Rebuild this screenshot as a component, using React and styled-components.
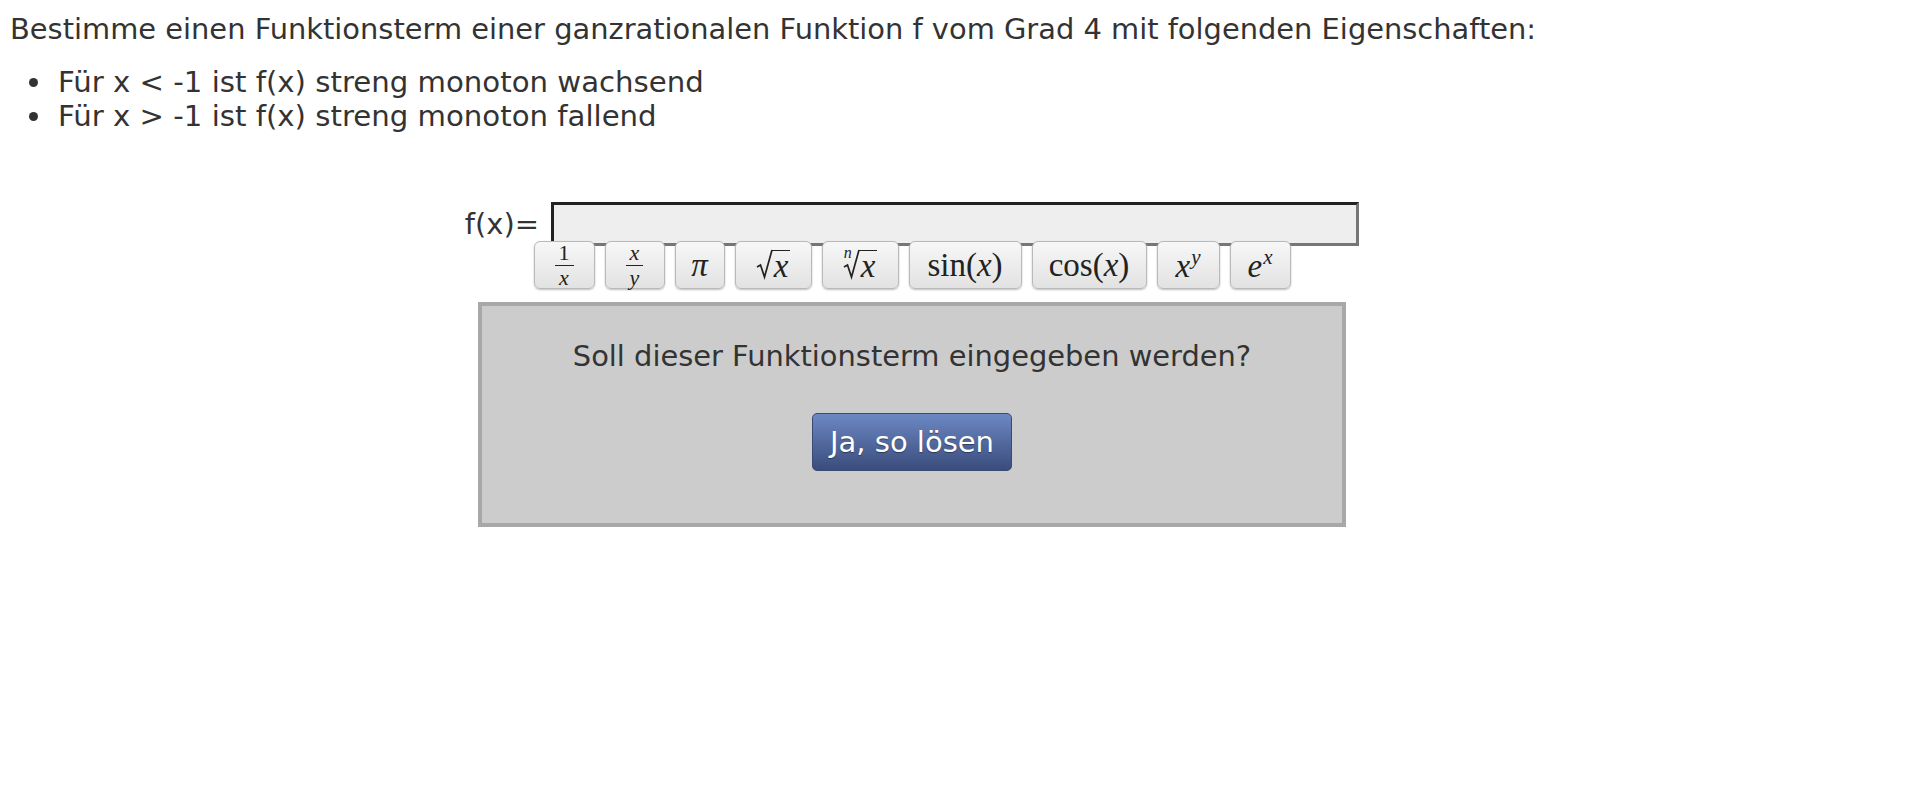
import React from 'react'
import styled, { createGlobalStyle } from 'styled-components'

const Global = createGlobalStyle`
  body {
    margin: 0;
    background: #fff;
    font-family: "DejaVu Sans", Verdana, sans-serif;
    color: #333;
  }
`

const Page = styled.div`
  padding: 12px 10px 40px 10px;
`

const Heading = styled.p`
  margin: 0;
  font-size: 28.9px;
  line-height: 34px;
`

const List = styled.ul`
  margin: 19px 0 0 0;
  padding-left: 48px;
  list-style: none;
  font-size: 29.2px;
  line-height: 34px;
`

const Item = styled.li`
  &::before {
    content: "";
    display: inline-block;
    width: 9px;
    height: 9px;
    border-radius: 50%;
    background: #333;
    margin-left: -29px;
    margin-right: 20px;
    vertical-align: 5px;
  }
`

const Main = styled.div`
  width: 1804px;
  margin-top: 69px;
  display: flex;
  flex-direction: column;
  align-items: center;
`

const InputRow = styled.div`
  display: flex;
  align-items: center;
  gap: 12px;
`

const Label = styled.span`
  font-size: 29px;
  line-height: 44px;
  color: #333;
`

const TermInput = styled.div`
  width: 802px;
  height: 38px;
  background: #eeeeee;
  border: 3px solid;
  border-color: #222 #767676 #767676 #222;
`

const Keypad = styled.div`
  display: flex;
  gap: 10px;
  margin-top: -5px;
  position: relative;
`

const Key = styled.button`
  min-width: ${p => p.$w}px;
  height: 48px;
  padding: 0 8px;
  display: flex;
  align-items: center;
  justify-content: center;
  background: linear-gradient(#f7f7f7, #e2e2e2);
  border: 1px solid #b9b9b9;
  border-radius: 6px;
  box-shadow: 0 1px 2px rgba(0, 0, 0, 0.25);
  font-family: "Liberation Serif", "DejaVu Serif", serif;
  font-size: 33px;
  color: #222;
  cursor: pointer;
`

const Var = styled.i`
  font-style: italic;
`

const Frac = styled.span`
  display: inline-flex;
  flex-direction: column;
  align-items: center;
  font-size: 22px;
  line-height: 19px;
`

const Num = styled.span`
  padding: 0 4px 3px;
  border-bottom: 1.3px solid #222;
`

const Den = styled.span`
  padding-top: 2px;
`

const Root = styled.span`
  display: inline-flex;
  align-items: flex-end;
  position: relative;
`

const RootIndex = styled.i`
  position: absolute;
  left: 1px;
  top: -5px;
  font-size: 16px;
`

const Radicand = styled.span`
  border-top: 1.6px solid #222;
  padding: 0 2px;
  line-height: 30px;
  font-style: italic;
`

const Sup = styled.sup`
  font-size: 21px;
  font-style: italic;
  vertical-align: 13px;
  margin-left: 1px;
`

const Panel = styled.div`
  margin-top: 13px;
  width: 860px;
  background: #cccccc;
  border: 4px solid #a8a8a8;
  padding: 34px 0 52px;
  display: flex;
  flex-direction: column;
  align-items: center;
`

const Question = styled.p`
  margin: 0;
  font-size: 28.9px;
  line-height: 32px;
  color: #333;
`

const Solve = styled.button`
  margin-top: 41px;
  height: 58px;
  padding: 0 17px;
  background: linear-gradient(#6c88c3, #3a4c7c);
  border: 1px solid #3a4a74;
  border-radius: 5px;
  color: #fff;
  font-family: "DejaVu Sans", Verdana, sans-serif;
  font-size: 29px;
  text-shadow: 0 1px 1px rgba(0, 0, 0, 0.4);
  cursor: pointer;
`

const RadicalSign = () => (
  <svg width="17" height="32" viewBox="0 0 17 32" style={{ marginRight: -1 }}>
    <path d="M1 18 L4.5 16 L8.5 28 L16 1" fill="none" stroke="#222" strokeWidth="1.7" strokeLinejoin="miter" />
  </svg>
)

const keys = [
  { w: 61, content: <Frac><Num>1</Num><Den><Var>x</Var></Den></Frac> },
  { w: 60, content: <Frac><Num><Var>x</Var></Num><Den><Var>y</Var></Den></Frac> },
  { w: 50, content: <Var>π</Var> },
  { w: 77, content: <Root><RadicalSign /><Radicand>x</Radicand></Root> },
  { w: 77, content: <Root><RootIndex>n</RootIndex><RadicalSign /><Radicand>x</Radicand></Root> },
  { w: 113, content: <span>sin(<Var>x</Var>)</span> },
  { w: 115, content: <span>cos(<Var>x</Var>)</span> },
  { w: 63, content: <span><Var>x</Var><Sup>y</Sup></span> },
  { w: 61, content: <span><Var>e</Var><Sup>x</Sup></span> },
]

export default function App() {
  return (
    <Page>
      <Global />
      <Heading>Bestimme einen Funktionsterm einer ganzrationalen Funktion f vom Grad 4 mit folgenden Eigenschaften:</Heading>
      <List>
        <Item>Für x &lt; -1 ist f(x) streng monoton wachsend</Item>
        <Item>Für x &gt; -1 ist f(x) streng monoton fallend</Item>
      </List>
      <Main>
        <InputRow>
          <Label>f(x)=</Label>
          <TermInput />
        </InputRow>
        <Keypad>
          {keys.map((k, i) => (
            <Key key={i} $w={k.w}>{k.content}</Key>
          ))}
        </Keypad>
        <Panel>
          <Question>Soll dieser Funktionsterm eingegeben werden?</Question>
          <Solve>Ja, so lösen</Solve>
        </Panel>
      </Main>
    </Page>
  )
}
